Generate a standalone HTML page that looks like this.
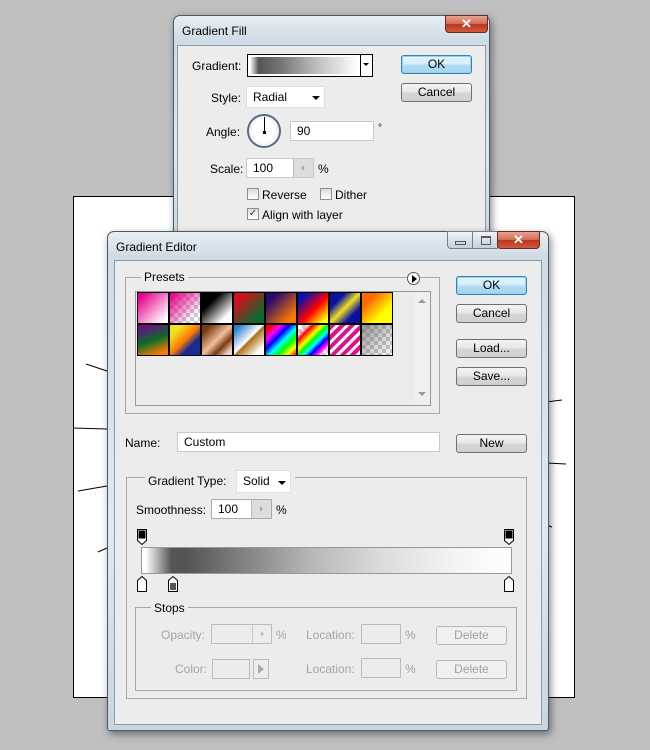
<!DOCTYPE html>
<html><head><meta charset="utf-8"><style>
*{box-sizing:border-box;margin:0;padding:0}
body{width:650px;height:750px;background:#bfbfbf;position:relative;overflow:hidden;font-family:"Liberation Sans",sans-serif;font-size:12px;color:#000}
.a{position:absolute;white-space:nowrap}
.win{position:absolute;border:1px solid #4a5a66;border-radius:7px 7px 3px 3px;background:linear-gradient(180deg,#e8eef3 0,#cfdbe4 25px,#dfe8ee 60%,#c7d6df 100%);box-shadow:2px 3px 8px rgba(0,0,0,.45)}
.client{position:absolute;background:#ececec;border:1px solid #8a9aa6}
.title{position:absolute;font-size:12px;color:#000}
.btn{position:absolute;height:19px;border:1px solid #707070;border-radius:3px;background:linear-gradient(#f4f4f4 0,#e6e6e6 50%,#d6d6d6 51%,#cfcfcf 100%);text-align:center;line-height:17px;font-size:12px}
.btn.def{border-color:#3c7fb1;background:linear-gradient(#e6f5fc 0,#d3edfa 50%,#b0dcf4 51%,#a6d5f0 100%);box-shadow:inset 0 0 0 1px #8fd3f4}
.btn.dis{color:#a0a0a0;border-color:#b8b8b8;background:#f0f0f0}
.inp{position:absolute;background:#fff;border:1px solid #c9c9c9;height:20px;line-height:18px;padding-left:6px;white-space:nowrap}
.grp{position:absolute;border:1px solid #a8a8a8}
.lbl{position:absolute;background:#ececec;padding:0 3px;white-space:nowrap}
.close{position:absolute;width:43px;height:18px;border:1px solid #6b2a20;border-radius:0 0 4px 4px;background:linear-gradient(#e8a493 0,#d06a52 50%,#b8371f 51%,#d2583c 100%);color:#fff;font-weight:bold;text-align:center;line-height:16px;font-size:13px}
.cb{position:absolute;width:12px;height:12px;border:1px solid #8f8f8f;background:linear-gradient(#ddd,#fff)}
.g{color:#a4a4a4}
.cell{position:absolute;width:32px;height:32px;border:1px solid #000}
.chk{background-color:#fff;background-image:linear-gradient(45deg,#ccc 25%,transparent 25%,transparent 75%,#ccc 75%),linear-gradient(45deg,#ccc 25%,transparent 25%,transparent 75%,#ccc 75%);background-size:8px 8px;background-position:0 0,4px 4px}
</style></head><body>
<div class="a" style="left:73px;top:196px;width:502px;height:502px;background:#fff;border:1px solid #000"></div>
<svg class="a" style="left:0;top:0" width="650" height="750"><g stroke="#000" stroke-width="1" fill="none">
<line x1="86" y1="364" x2="107" y2="371"/><line x1="73" y1="428" x2="107" y2="429"/><line x1="78" y1="491" x2="107" y2="486"/><line x1="98" y1="552" x2="107" y2="548"/>
<line x1="546" y1="402" x2="562" y2="400"/><line x1="546" y1="463" x2="566" y2="464"/><line x1="546" y1="525" x2="552" y2="527"/>
</g></svg>

<div class="win" style="left:173px;top:15px;width:317px;height:225px">
<div class="title" style="left:8px;top:8px">Gradient Fill</div>
<div class="close" style="left:271px;top:-1px">✕</div>
<div class="client" style="left:3px;top:29px;width:309px;height:200px"></div>
</div>
<div class="a" style="left:192px;top:59px">Gradient:</div>
<div class="a" style="left:247px;top:54px;width:126px;height:23px;border:1px solid #000;background:#fff">
<div class="a" style="left:2px;top:2px;width:108px;height:17px;background:linear-gradient(90deg,#fff 0,#555 8%,#777 30%,#bbb 60%,#fff 100%)"></div>
<div class="a" style="left:112px;top:0;width:1px;height:21px;background:#000"></div>
<div class="a" style="left:115px;top:8px;width:0;height:0;border:3px solid transparent;border-top:3px solid #000"></div></div>
<div class="btn def" style="left:401px;top:55px;width:71px">OK</div>
<div class="btn" style="left:401px;top:83px;width:71px">Cancel</div>
<div class="a" style="left:211px;top:91px">Style:</div>
<div class="inp" style="left:246px;top:86px;width:79px;height:22px;border-color:#e0e0e0;line-height:20px">Radial<span class="a" style="left:65px;top:9px;border:4px solid transparent;border-top:4px solid #000"></span></div>
<div class="a" style="left:206px;top:125px">Angle:</div>
<div class="a" style="left:247px;top:114px;width:34px;height:34px;border-radius:50%;border:2px solid #5a6a80;background:radial-gradient(#fff 50%,#dde 100%)"></div>
<div class="a" style="left:264px;top:117px;width:1px;height:15px;background:#000"></div>
<div class="a" style="left:263px;top:131px;width:3px;height:3px;background:#000"></div>
<div class="inp" style="left:290px;top:121px;width:84px">90</div>
<div class="a" style="left:378px;top:123px;font-size:10px">°</div>
<div class="a" style="left:210px;top:162px">Scale:</div>
<div class="inp" style="left:246px;top:158px;width:68px">100</div>
<div class="a" style="left:293px;top:159px;width:20px;height:18px;background:#ddd;border-left:1px solid #bbb"><span class="a" style="left:8px;top:6px;border:3px solid transparent;border-left:3px solid #9ab"></span></div>
<div class="a" style="left:318px;top:162px">%</div>
<div class="cb" style="left:247px;top:188px"></div><div class="a" style="left:262px;top:188px">Reverse</div>
<div class="cb" style="left:320px;top:188px"></div><div class="a" style="left:335px;top:188px">Dither</div>
<div class="cb" style="left:247px;top:208px;font-size:10px;line-height:10px;color:#334;text-align:center">✓</div><div class="a" style="left:262px;top:208px">Align with layer</div>

<div class="win" style="left:107px;top:231px;width:442px;height:500px">
<div class="title" style="left:8px;top:8px">Gradient Editor</div>
<div class="a" style="left:339px;top:-1px;width:26px;height:18px;border:1px solid #6f7f8c;border-radius:0 0 0 4px;background:linear-gradient(#f0f4f7,#c4d0da)"><span class="a" style="left:7px;top:9px;width:11px;height:4px;border:1px solid #556"></span></div>
<div class="a" style="left:364px;top:-1px;width:26px;height:18px;border:1px solid #6f7f8c;background:linear-gradient(#f0f4f7,#c4d0da)"><span class="a" style="left:8px;top:4px;width:10px;height:9px;border:1px solid #556;border-top-width:2px"></span></div>
<div class="close" style="left:389px;top:-1px">✕</div>
<div class="client" style="left:6px;top:28px;width:428px;height:465px"></div>
</div>
<div class="grp" style="left:125px;top:277px;width:315px;height:137px"></div>
<div class="lbl" style="left:141px;top:270px">Presets</div>
<div class="a" style="left:407px;top:272px;width:13px;height:13px;border-radius:50%;border:1px solid #555;background:#fff"><span class="a" style="left:4px;top:2px;border:4px solid transparent;border-left:5px solid #000;border-right:0"></span></div>
<div class="a" style="left:135px;top:291px;width:296px;height:115px;border:1px solid #999;background:#ececec"></div>
<div class="a" style="left:414px;top:292px;width:16px;height:113px;background:#efefef"><span class="a" style="left:4px;top:7px;border:4px solid transparent;border-bottom:4px solid #999;border-top:0"></span><span class="a" style="left:4px;top:100px;border:4px solid transparent;border-top:4px solid #999;border-bottom:0"></span></div>
<div class="cell" style="left:137px;top:292px;background:linear-gradient(135deg,#e8008c 10%,#fff 90%)"></div>
<div class="cell chk" style="left:169px;top:292px"><div style="width:100%;height:100%;background:linear-gradient(135deg,#e8008c 5%,rgba(232,0,140,0) 80%)"></div></div>
<div class="cell" style="left:201px;top:292px;background:linear-gradient(135deg,#000 30%,#fff 80%)"></div>
<div class="cell" style="left:233px;top:292px;background:linear-gradient(135deg,#d0101e 20%,#0a6a2a 80%)"></div>
<div class="cell" style="left:265px;top:292px;background:linear-gradient(135deg,#2a0a6a 20%,#ff7a00 85%)"></div>
<div class="cell" style="left:297px;top:292px;background:linear-gradient(135deg,#0a10b0 15%,#ff0000 55%,#ffff00 90%)"></div>
<div class="cell" style="left:329px;top:292px;background:linear-gradient(135deg,#0a10a0 25%,#f0e020 50%,#0a10a0 75%)"></div>
<div class="cell" style="left:361px;top:292px;background:linear-gradient(135deg,#ff6a00 25%,#ffff00 70%)"></div>
<div class="cell" style="left:137px;top:324px;background:linear-gradient(160deg,#6a1080 10%,#0a6a2a 50%,#ff7a00 90%)"></div>
<div class="cell" style="left:169px;top:324px;background:linear-gradient(135deg,#f0e020 20%,#ff7a00 50%,#1a2a90 70%)"></div>
<div class="cell" style="left:201px;top:324px;background:linear-gradient(135deg,#7a3a10 15%,#f0c0a0 50%,#7a3a10 70%,#f0d0c0 90%)"></div>
<div class="cell" style="left:233px;top:324px;background:linear-gradient(135deg,#2a80d0 10%,#fff 48%,#b07010 52%,#fff 85%)"></div>
<div class="cell" style="left:265px;top:324px;background:linear-gradient(135deg,#f00 10%,#f0f 25%,#00f 40%,#0ff 55%,#0f0 70%,#ff0 85%,#f00 100%)"></div>
<div class="cell chk" style="left:297px;top:324px"><div style="width:100%;height:100%;background:linear-gradient(135deg,transparent 15%,#f00 25%,#ff0 40%,#0f0 50%,#0ff 60%,#00f 70%,#f0f 80%,transparent 90%)"></div></div>
<div class="cell" style="left:329px;top:324px;background:repeating-linear-gradient(135deg,#e0108c 0 4px,#fff 4px 7px)"></div>
<div class="cell chk" style="left:361px;top:324px"><div style="width:100%;height:100%;background:linear-gradient(135deg,rgba(80,80,80,.6),transparent)"></div></div>
<div class="btn def" style="left:456px;top:276px;width:71px">OK</div>
<div class="btn" style="left:456px;top:304px;width:71px">Cancel</div>
<div class="btn" style="left:456px;top:339px;width:71px">Load...</div>
<div class="btn" style="left:456px;top:367px;width:71px">Save...</div>
<div class="a" style="left:125px;top:436px">Name:</div>
<div class="inp" style="left:177px;top:432px;width:263px">Custom</div>
<div class="btn" style="left:456px;top:434px;width:71px">New</div>
<div class="grp" style="left:126px;top:477px;width:401px;height:222px"></div>
<div class="lbl" style="left:145px;top:474px;width:150px">Gradient Type:</div>
<div class="inp" style="left:236px;top:470px;width:55px;height:23px;border-color:#e0e0e0;line-height:21px">Solid<span class="a" style="left:41px;top:10px;border:4px solid transparent;border-top:4px solid #000"></span></div>
<div class="a" style="left:136px;top:503px">Smoothness:</div>
<div class="inp" style="left:211px;top:499px;width:61px;border-color:#aaa">100</div>
<div class="a" style="left:251px;top:500px;width:20px;height:18px;background:#ddd;border-left:1px solid #bbb"><span class="a" style="left:8px;top:6px;border:3px solid transparent;border-left:3px solid #9ab"></span></div>
<div class="a" style="left:276px;top:503px">%</div>
<svg class="a" style="left:135px;top:528px" width="385" height="66">
<g stroke="#000" fill="#000"><path d="M2.5 1.5h9v11l-4.5 4-4.5-4z" fill="#fff"/><rect x="4" y="3" width="6" height="7"/>
<path d="M369.5 1.5h9v11l-4.5 4-4.5-4z" fill="#fff"/><rect x="371" y="3" width="6" height="7"/>
<path d="M2.5 63.5h9v-11l-4.5-4-4.5 4z" fill="#fff"/>
<path d="M33.5 63.5h9v-11l-4.5-4-4.5 4z" fill="#fff"/><rect x="35" y="55" width="6" height="7" fill="#555" stroke="none"/>
<path d="M369.5 63.5h9v-11l-4.5-4-4.5 4z" fill="#fff"/></g></svg>
<div class="a" style="left:141px;top:547px;width:371px;height:27px;border:1px solid #999;background:linear-gradient(90deg,#fff 0,#fff 1%,#555 8%,#555 12%,#7a7a7a 25%,#b5b5b5 45%,#dcdcdc 65%,#f4f4f4 85%,#fff 100%)"></div>
<div class="grp" style="left:135px;top:607px;width:382px;height:84px"></div>
<div class="lbl" style="left:151px;top:601px">Stops</div>
<div class="a g" style="left:161px;top:628px">Opacity:</div>
<div class="inp" style="left:211px;top:624px;width:61px;background:#ececec;border-color:#bbb"></div>
<div class="a" style="left:252px;top:625px;width:19px;height:18px;border-left:1px solid #ccc"><span class="a" style="left:8px;top:6px;border:3px solid transparent;border-left:3px solid #bbb"></span></div>
<div class="a g" style="left:276px;top:628px">%</div>
<div class="a g" style="left:306px;top:628px">Location:</div>
<div class="inp" style="left:361px;top:624px;width:40px;background:#ececec;border-color:#bbb"></div>
<div class="a g" style="left:405px;top:628px">%</div>
<div class="btn dis" style="left:436px;top:626px;width:71px">Delete</div>
<div class="a g" style="left:175px;top:662px">Color:</div>
<div class="inp" style="left:212px;top:659px;width:38px;background:#ececec;border-color:#bbb"></div>
<div class="a" style="left:253px;top:659px;width:16px;height:20px;border:1px solid #bbb"><span class="a" style="left:4px;top:4px;border:5px solid transparent;border-left:6px solid #aaa;border-right:0"></span></div>
<div class="a g" style="left:306px;top:662px">Location:</div>
<div class="inp" style="left:361px;top:658px;width:40px;background:#ececec;border-color:#bbb"></div>
<div class="a g" style="left:405px;top:662px">%</div>
<div class="btn dis" style="left:436px;top:660px;width:71px">Delete</div>
</body></html>
